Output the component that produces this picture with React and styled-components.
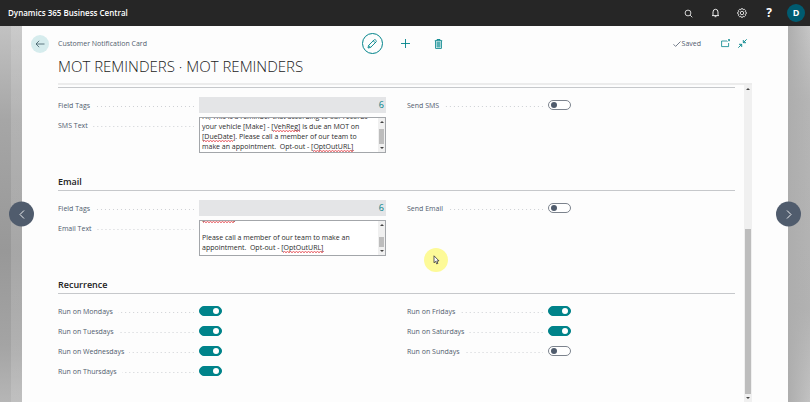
import React, { useLayoutEffect, useRef } from "react";
import styled, { createGlobalStyle } from "styled-components";

const TEAL = "#00838a";
const SLATE = "#505c6d";

const GlobalStyle = createGlobalStyle`
  *, *::before, *::after { box-sizing: border-box; }
  body {
    margin: 0;
    background: #fdfdfd;
    color: #505c6d;
    font-family: "Open Sans", "Noto Sans", sans-serif;
    font-size: 7px;
    line-height: 10px;
  }
  button, input, textarea { font: inherit; color: inherit; margin: 0; }
`;

const Page = styled.div`
  display: flex;
  flex-direction: column;
  height: 100vh;
  overflow: hidden;
`;

const TopBar = styled.header`
  display: flex;
  align-items: center;
  justify-content: space-between;
  flex: none;
  height: 26px;
  padding: 0 5px 0 8px;
  color: #fff;
  background: #262626;
`;

const Brand = styled.span`
  font-size: 8px;
  font-weight: 600;
`;

const TopActions = styled.nav`
  display: flex;
  align-items: center;
  gap: 9px;
`;

const IconButton = styled.button`
  display: flex;
  align-items: center;
  justify-content: center;
  width: ${(p) => p.$size || 18}px;
  height: ${(p) => p.$size || 18}px;
  padding: 0;
  border: ${(p) => (p.$ring ? `1px solid ${TEAL}` : "0")};
  border-radius: 50%;
  background: ${(p) => p.$bg || "transparent"};
  color: ${(p) => p.$color || "#fff"};
  font-size: ${(p) => p.$text || 8}px;
  font-weight: 700;
  cursor: pointer;
`;

const Stage = styled.div`
  display: flex;
  flex: 1;
  min-height: 0;
`;

const Strip = styled.aside`
  position: relative;
  flex: none;
  width: 22px;
  background: ${(p) =>
    p.$side === "left"
      ? "linear-gradient(90deg, transparent 50%, rgba(255,255,255,0.14) 50%), linear-gradient(#c2c2c2, #a6a6a6 25%, #989898 60%, #a4a4a4 85%, #b6b6b6)"
      : "linear-gradient(90deg, #adadad, transparent), linear-gradient(#c6c6c6, #b5b5b5 20%, #b2b2b2 75%, #c2c2c2)"};
`;

const PageTurn = styled.button`
  position: absolute;
  z-index: 1;
  top: 50%;
  ${(p) => (p.$side === "left" ? "right" : "left")}: -12px;
  display: flex;
  align-items: center;
  justify-content: center;
  width: 25px;
  height: 25px;
  padding: 0;
  border: 0;
  border-radius: 50%;
  background: ${SLATE};
  color: #fff;
  transform: translateY(-50%);
  cursor: pointer;
`;

const Card = styled.main`
  display: flex;
  flex-direction: column;
  flex: 1;
  min-width: 0;
`;

const Toolbar = styled.div`
  display: grid;
  grid-template-columns: 1fr auto 1fr;
  align-items: center;
  height: 28px;
  padding: 7px 41px 0 9px;
`;

const Crumb = styled.div`
  display: flex;
  align-items: center;
  gap: 9px;
`;

const Commands = styled.div`
  display: flex;
  gap: 12px;
  padding-left: 32px;
`;

const Status = styled.div`
  display: flex;
  align-items: center;
  justify-content: flex-end;
  gap: 8px;
`;

const Saved = styled.span`
  display: flex;
  align-items: center;
  gap: 1px;
  margin-right: 12px;
`;

const Title = styled.h1`
  margin: 0 36px 5px;
  color: #222;
  font-size: 15px;
  font-weight: 300;
  line-height: 24px;
  white-space: nowrap;
`;

const Pane = styled.div`
  position: relative;
  display: flex;
  flex: 1;
  min-height: 0;
  margin: 0 36px;
  border-top: 2px solid #ececec;
`;

const Form = styled.form`
  flex: 1;
  min-width: 0;
  padding: 2px 9px 0 0;
`;

const Section = styled.section`
  margin-bottom: 21px;
`;

const SectionTitle = styled.h2`
  margin: 0;
  color: #222;
  font-size: 9px;
  font-weight: 600;
  line-height: 16px;
`;

const Fields = styled.div`
  display: grid;
  grid-template-columns: 1fr 1fr;
  align-items: start;
  column-gap: 21px;
  padding-top: 9px;
  border-top: 1px solid #c6c8cb;
`;

const Column = styled.div`
  display: flex;
  flex-direction: column;
  gap: 4px;
`;

const Row = styled.div`
  display: grid;
  grid-template-columns: 43% 1fr;
  align-items: start;
`;

const Label = styled.label`
  display: flex;
  align-items: center;
  gap: 5px;
  height: 18px;
  margin-bottom: -2px;
  padding-right: 5px;
  white-space: nowrap;

  &::after {
    content: "";
    flex: 1;
    height: 1px;
    background: linear-gradient(90deg, transparent 3px, #cdd0d4 3px) right 0 / 4px 1px repeat-x;
  }
`;

const CountInput = styled.input`
  width: 100%;
  height: 16px;
  padding: 0 2px 1px;
  border: 0;
  border-radius: 0;
  background: #e4e5e7;
  color: ${TEAL};
  font-size: 9px;
  text-align: right;
`;

const Switch = styled.input`
  appearance: none;
  display: flex;
  align-items: center;
  justify-content: ${(p) => (p.defaultChecked ? "flex-end" : "flex-start")};
  width: 23px;
  height: 10px;
  margin: 3px 0;
  padding: 0 2px;
  border: 1px solid ${(p) => (p.defaultChecked ? TEAL : "#7c838d")};
  border-radius: 5px;
  background: ${(p) => (p.defaultChecked ? TEAL : "#fff")};

  &::before {
    content: "";
    width: 6px;
    height: 6px;
    border-radius: 50%;
    background: ${(p) => (p.defaultChecked ? "#fff" : SLATE)};
  }
`;

const MemoBox = styled.div`
  position: relative;
  display: flex;
  height: 36px;
  overflow: hidden;
  border: 1px solid #a3a6aa;
  background: #fff;
`;

const MemoText = styled.textarea`
  flex: 1;
  min-width: 0;
  padding: 0 0 ${(p) => p.$pad}px 2px;
  border: 0;
  outline: 0;
  resize: none;
  overflow: hidden;
  background: transparent;
  color: #2b2b2b;
  white-space: pre;
`;

const Wave = styled.svg`
  position: absolute;
  left: ${(p) => p.$left}px;
  bottom: ${(p) => p.$bottom}px;
  width: ${(p) => p.$width}px;
  height: 2px;
`;

const Track = styled.div`
  display: flex;
  flex-direction: column;
  align-items: center;
  flex: none;
  width: ${(p) => p.$width}px;
  background: #f0f0f0;
`;

const Arrow = styled.svg`
  flex: none;
  width: 4px;
  height: 2px;
  margin: 3px 0;
  fill: #444;
`;

const Space = styled.div`
  flex: ${(p) => p.$grow};
`;

const Thumb = styled.div`
  flex: ${(p) => p.$grow};
  width: calc(100% - 2px);
  background: #bdbdbd;
`;

const Pointer = styled.div`
  position: absolute;
  top: 163px;
  left: 366px;
  display: flex;
  align-items: center;
  justify-content: center;
  width: 24px;
  height: 24px;
  border-radius: 50%;
  background: #fdfa98;
`;

function Scrollbar({ width, before, thumb }) {
  return (
    <Track $width={width} aria-hidden="true">
      <Arrow viewBox="0 0 4 2"><path d="M0 2 2 0l2 2z" /></Arrow>
      <Space $grow={before} />
      <Thumb $grow={thumb} />
      <Arrow viewBox="0 0 4 2"><path d="M0 0l2 2 2-2z" /></Arrow>
    </Track>
  );
}

function Memo({ id, text, pad, waves, before, thumb }) {
  const ref = useRef(null);
  useLayoutEffect(() => {
    ref.current.scrollTop = ref.current.scrollHeight;
  }, []);
  return (
    <MemoBox>
      <MemoText id={id} ref={ref} defaultValue={text} $pad={pad} spellCheck={false} />
      {waves.map(([left, width, bottom]) => (
        <Wave key={`${left}-${bottom}`} $left={left} $width={width} $bottom={bottom} aria-hidden="true">
          <defs>
            <pattern id={`${id}-${left}`} width="3" height="2" patternUnits="userSpaceOnUse">
              <path d="M0 1.6 1.5 .4 3 1.6" fill="none" stroke="#e2343c" strokeWidth=".9" />
            </pattern>
          </defs>
          <rect width="100%" height="2" fill={`url(#${id}-${left})`} />
        </Wave>
      ))}
      <Scrollbar width={7} before={before} thumb={thumb} />
    </MemoBox>
  );
}

function Toggle({ id, label, on }) {
  return (
    <Row>
      <Label htmlFor={id}>{label}</Label>
      <Switch id={id} type="checkbox" role="switch" defaultChecked={on} />
    </Row>
  );
}

function Count({ id }) {
  return (
    <Row>
      <Label htmlFor={id}>Field Tags</Label>
      <CountInput id={id} readOnly defaultValue="6" />
    </Row>
  );
}

function Icon({ w, h, sw = 1, children }) {
  return (
    <svg width={w} height={h} viewBox={`0 0 ${w} ${h}`} fill="none" stroke="currentColor" strokeWidth={sw} aria-hidden="true">
      {children}
    </svg>
  );
}

const smsText = `Hi, This is a reminder that according to our records
your vehicle [Make] - [VehReg] is due an MOT on
[DueDate]. Please call a member of our team to
make an appointment.  Opt-out - [OptOutURL]`;

const emailText = `[DueDate].

Please call a member of our team to make an
appointment.  Opt-out - [OptOutURL]`;

const firstDays = ["Mondays", "Tuesdays", "Wednesdays", "Thursdays"];
const lastDays = [["Fridays", true], ["Saturdays", true], ["Sundays", false]];

export default function App() {
  return (
    <Page>
      <GlobalStyle />
      <TopBar>
        <Brand>Dynamics 365 Business Central</Brand>
        <TopActions>
          <IconButton aria-label="Search">
            <Icon w={9} h={9} sw={0.8}><circle cx="4" cy="4" r="2.9" /><path d="M6.1 6.1 8.3 8.3" /></Icon>
          </IconButton>
          <IconButton aria-label="Notifications">
            <Icon w={9} h={10} sw={0.9}><path d="M1 7.6h7M2 7.4V4a2.5 2.7 0 0 1 5 0v3.4M3.6 8.7h1.8" /></Icon>
          </IconButton>
          <IconButton aria-label="Settings">
            <Icon w={10} h={10} sw={0.8}>
              <circle cx="5" cy="5" r="1.7" />
              <path d="M4.2.7h1.6l.4 1.1 1.2-.5 1.2 1.2-.5 1.2 1.2.5v1.6l-1.2.5.5 1.2-1.2 1.2-1.2-.5-.4 1.1H4.2l-.4-1.1-1.2.5-1.2-1.2.5-1.2-1.2-.5V4.2l1.2-.5-.5-1.2 1.2-1.2 1.2.5z" />
            </Icon>
          </IconButton>
          <IconButton aria-label="Help" $text={12}>?</IconButton>
          <IconButton aria-label="Account" $bg="#005b70" $text={9}>D</IconButton>
        </TopActions>
      </TopBar>
      <Stage>
        <Strip $side="left">
          <PageTurn $side="left" aria-label="Previous">
            <Icon w={6} h={10} sw={0.9}><path d="M5 1 1 5l4 4" /></Icon>
          </PageTurn>
        </Strip>
        <Card>
          <Toolbar>
            <Crumb>
              <IconButton aria-label="Back" $bg="#d6eced" $color="#3f5c66">
                <Icon w={10} h={8} sw={0.8}><path d="M9.5 4H1M4.2.8 1 4l3.2 3.2" /></Icon>
              </IconButton>
              Customer Notification Card
            </Crumb>
            <Commands>
              <IconButton aria-label="Edit" $size={21} $ring $color={TEAL}>
                <Icon w={10} h={10} sw={0.9}><path d="M1 9l.6-2.6L7 1c.5-.5 1.1-.5 1.6 0l.4.4c.5.5.5 1 0 1.6L3.6 8.4zM1.6 6.4l2 2M6.3 1.8l2 2" /></Icon>
              </IconButton>
              <IconButton aria-label="New" $size={21} $color={TEAL}>
                <Icon w={9} h={9} sw={0.9}><path d="M4.5 0v9M0 4.5h9" /></Icon>
              </IconButton>
              <IconButton aria-label="Delete" $size={21} $color={TEAL}>
                <Icon w={9} h={10} sw={0.9}>
                  <path d="M.8 1.7h7.4M3 1.5V.5h3v1M1.6 2v7.4h5.8V2" />
                  <path d="M3 3h3v5H3z" fill="#58b0b4" stroke="#58b0b4" />
                </Icon>
              </IconButton>
            </Commands>
            <Status>
              <Saved>
                <Icon w={8} h={6} sw={0.8}><path d="M.5 3.3 2.6 5.4 7.5.5" /></Icon>
                Saved
              </Saved>
              <IconButton aria-label="Open in new window" $size={9} $color={TEAL}>
                <Icon w={9} h={9} sw={0.8}><path d="M6 2H.6v5.6h7V4M6.6 2.6 8.6.6M7 .6h1.6v1.6" /></Icon>
              </IconButton>
              <IconButton aria-label="Collapse" $size={9} $color={TEAL}>
                <Icon w={9} h={9} sw={0.9}><path d="M8.7.3 5.4 3.6M5.3 1v2.7H8M.3 8.7l3.3-3.3M3.7 8V5.3H1" /></Icon>
              </IconButton>
            </Status>
          </Toolbar>
          <Title>MOT REMINDERS · MOT REMINDERS</Title>
          <Pane>
            <Form>
              <Section aria-label="SMS">
                <Fields>
                  <Column>
                    <Count id="sms-tags" />
                    <Row>
                      <Label htmlFor="sms-text">SMS Text</Label>
                      <Memo id="sms-text" text={smsText} pad={0} before={3} thumb={15}
                        waves={[[73, 27, 20], [3, 30, 10], [113, 41, 0]]} />
                    </Row>
                  </Column>
                  <Column><Toggle id="send-sms" label="Send SMS" on={false} /></Column>
                </Fields>
              </Section>
              <Section>
                <SectionTitle>Email</SectionTitle>
                <Fields>
                  <Column>
                    <Count id="email-tags" />
                    <Row>
                      <Label htmlFor="email-text">Email Text</Label>
                      <Memo id="email-text" text={emailText} pad={2} before={8} thumb={11}
                        waves={[[3, 32, 32], [83, 41, 2]]} />
                    </Row>
                  </Column>
                  <Column><Toggle id="send-email" label="Send Email" on={false} /></Column>
                </Fields>
              </Section>
              <Section>
                <SectionTitle>Recurrence</SectionTitle>
                <Fields>
                  <Column>
                    {firstDays.map((day) => (
                      <Toggle key={day} id={day} label={`Run on ${day}`} on />
                    ))}
                  </Column>
                  <Column>
                    {lastDays.map(([day, on]) => (
                      <Toggle key={day} id={day} label={`Run on ${day}`} on={on} />
                    ))}
                  </Column>
                </Fields>
              </Section>
            </Form>
            <Scrollbar width={8} before={137} thumb={167} />
            <Pointer aria-hidden="true">
              <svg width="7" height="10" viewBox="0 0 7 10">
                <path d="M1 .8v7l1.6-1.5 1.1 2.6 1.2-.5-1.1-2.5H6z" fill="#fff" stroke="#333" strokeWidth=".8" />
              </svg>
            </Pointer>
          </Pane>
        </Card>
        <Strip $side="right">
          <PageTurn $side="right" aria-label="Next">
            <Icon w={6} h={10} sw={0.9}><path d="M1 1l4 4-4 4" /></Icon>
          </PageTurn>
        </Strip>
      </Stage>
    </Page>
  );
}
